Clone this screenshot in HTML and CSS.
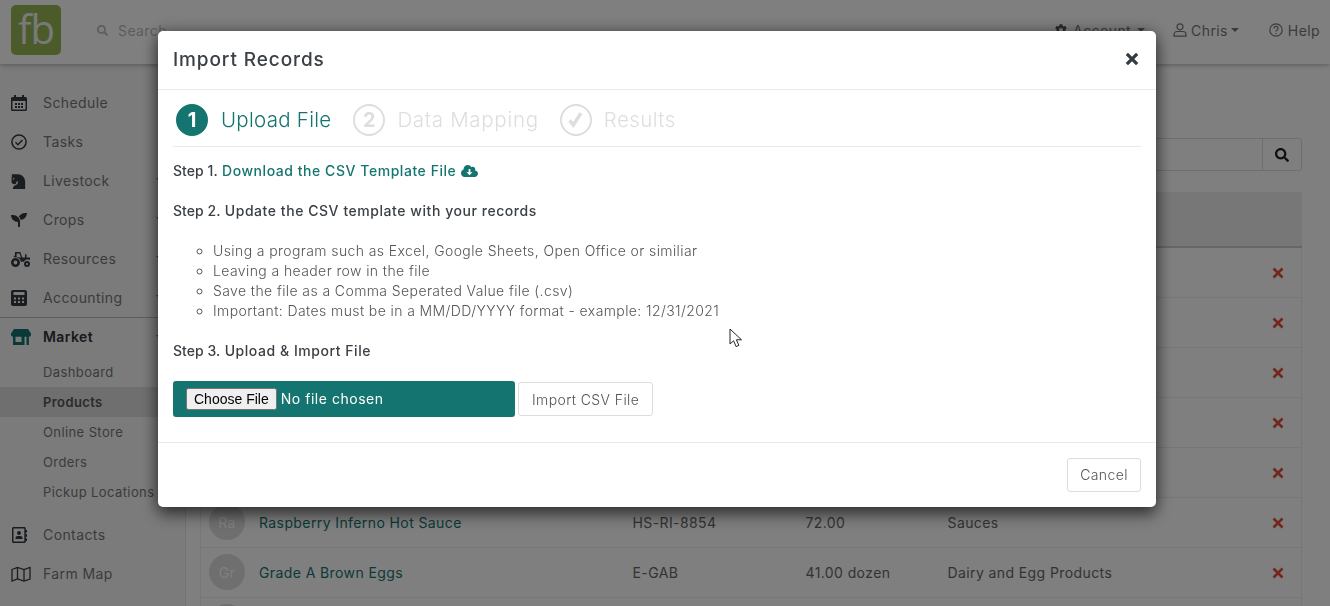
FILE: index.html
```html
<!DOCTYPE html>
<html lang="en">
<head>
<meta charset="utf-8">
<title>Products - Import Records</title>
<link rel="stylesheet" href="styles.css">
</head>
<body>
<div class="app">
  <header class="topbar">
    <div class="logo">fb</div>
    <div class="search">
      <svg class="search-icon" viewBox="0 0 512 512"><path d="M505 442.700L405.300 343c-4.500-4.500-10.600-7-17-7H372c27.600-35.300 44-79.700 44-128C416 93.100 322.900 0 208 0S0 93.100 0 208s93.100 208 208 208c48.300 0 92.700-16.400 128-44v16.300c0 6.400 2.500 12.500 7 17l99.700 99.700c9.400 9.400 24.600 9.400 33.900 0l28.300-28.300c9.400-9.400 9.400-24.600.1-34zM208 336c-70.700 0-128-57.200-128-128 0-70.700 57.200-128 128-128 70.700 0 128 57.200 128 128 0 70.700-57.200 128-128 128z"/></svg>
      <span>Search</span>
    </div>
    <nav class="topnav">
      <a class="topnav-item topnav-account">
        <svg class="top-icon" viewBox="0 0 24 24"><path d="M19.400 13c.1-.3.100-.7.100-1s0-.7-.1-1l2.100-1.600c.2-.1.200-.4.100-.6l-2-3.500c-.1-.2-.4-.3-.6-.2l-2.500 1c-.5-.4-1.100-.7-1.700-1l-.4-2.700c0-.2-.2-.4-.5-.4h-4c-.2 0-.4.200-.5.400l-.4 2.700c-.6.300-1.200.6-1.700 1l-2.500-1c-.2-.1-.5 0-.6.200l-2 3.500c-.1.200-.1.500.1.600L4.600 11c-.1.300-.1.700-.1 1s0 .7.100 1l-2.100 1.600c-.2.100-.2.400-.1.600l2 3.500c.1.200.4.300.6.200l2.500-1c.5.400 1.100.7 1.700 1l.4 2.700c0 .2.200.4.500.4h4c.2 0 .4-.2.500-.4l.4-2.700c.6-.3 1.200-.6 1.700-1l2.500 1c.2.100.5 0 .6-.2l2-3.500c.1-.2.100-.5-.1-.6zM12 15.500a3.500 3.500 0 1 1 0-7 3.500 3.500 0 0 1 0 7z"/></svg>
        <span>Account</span><i class="caret"></i>
      </a>
      <a class="topnav-item topnav-user">
        <svg class="top-icon outline" viewBox="0 0 14 14"><circle cx="7" cy="3.800" r="3"/><path d="M1 13.200v-1.700c0-1.800 1.300-3 3-3h6c1.700 0 3 1.200 3 3v1.700z"/></svg>
        <span>Chris</span><i class="caret"></i>
      </a>
      <a class="topnav-item">
        <svg class="top-icon outline" viewBox="0 0 14 14"><circle cx="7" cy="7" r="6.200"/><path d="M5 5.400c0-2.700 4.100-2.700 4.100-.1 0 1.700-2.100 1.600-2.100 3.200"/><path d="M7 10v1"/></svg>
        <span>Help</span>
      </a>
    </nav>
  </header>

  <div class="body-row">
    <aside class="sidebar">
      <a class="side-item">
        <svg class="side-icon" viewBox="0 0 16 16"><path fill-rule="evenodd" d="M3 0h2v2h6V0h2v2h1.500C15.300 2 16 2.700 16 3.500v11c0 .8-.7 1.500-1.500 1.500h-13C.7 16 0 15.300 0 14.500v-11C0 2.700.7 2 1.500 2H3zM1.500 6v8.300c0 .1.100.2.200.2h12.600c.1 0 .2-.1.200-.2V6zM4 8h2v2H4zm3 0h2v2H7zm3 0h2v2h-2zm-6 3h2v2H4zm3 0h2v2H7zm3 0h2v2h-2z"/></svg>
        <span>Schedule</span>
      </a>
      <a class="side-item">
        <svg class="side-icon stroke" viewBox="0 0 16 16"><circle cx="8" cy="8" r="7.100"/><path d="M4.500 8.300l2.400 2.400 4.600-4.800"/></svg>
        <span>Tasks</span>
      </a>
      <a class="side-item has-caret">
        <svg class="side-icon" viewBox="0 0 384 416"><path fill-rule="evenodd" d="M19 272.470l40.630 18.060a32 32 0 0 0 24.880.47l12.780-5.120a32 32 0 0 0 18.760-20.500l9.220-30.650a24 24 0 0 1 12.550-15.650L160 208v50.330a48 48 0 0 1-26.530 42.940l-57.130 28.590A80 80 0 0 0 32 401.410V416h319.860V224c0-106-85.920-192-191.860-192H12A12 12 0 0 0 0 44a16.900 16.900 0 0 0 1.790 7.580L16 80l-9 9a24 24 0 0 0-7 17v137.210a32 32 0 0 0 19 29.260zM52 128a20 20 0 1 1-20 20 20 20 0 0 1 20-20z"/></svg>
        <span>Livestock</span><i class="caret side-caret"></i>
      </a>
      <a class="side-item has-caret">
        <svg class="side-icon" viewBox="0 0 512 512"><path d="M64 96H0c0 123.700 100.300 224 224 224v144c0 8.800 7.200 16 16 16h32c8.800 0 16-7.200 16-16V320C288 196.300 187.700 96 64 96zm384-64c-84.200 0-157.400 46.500-195.700 115.200 27.700 30.200 48.200 66.900 59 107.600C424 243.100 512 147.900 512 32h-64z"/></svg>
        <span>Crops</span><i class="caret side-caret"></i>
      </a>
      <a class="side-item has-caret">
        <svg class="side-icon wide" viewBox="0 0 20 16"><path fill-rule="evenodd" d="M4 1h5.300l2 5.500h2.700V3.300h1.500v3.200H19v2.500c-2.500-.8-4.800-.4-6.300 1.700H9.800C9.500 8.300 8 6.800 5.600 6.300H2.800V4.800H4zm1.600 1.500v3.300l3.700.7.600-.2-1.400-3.800z"/><path fill-rule="evenodd" d="M4.500 7a4.500 4.500 0 1 1 0 9 4.500 4.500 0 0 1 0-9zm0 2.600a1.900 1.900 0 1 0 0 3.800 1.900 1.900 0 0 0 0-3.800zM16 10a3 3 0 1 1 0 6 3 3 0 0 1 0-6zm0 2a1 1 0 1 0 0 2 1 1 0 0 0 0-2z"/></svg>
        <span>Resources</span><i class="caret side-caret"></i>
      </a>
      <a class="side-item has-caret">
        <svg class="side-icon" viewBox="0 0 16 16"><path fill-rule="evenodd" d="M2 0h12c1.100 0 2 .9 2 2v12c0 1.100-.9 2-2 2H2c-1.100 0-2-.9-2-2V2C0 .9.900 0 2 0zm.500 2v3h11V2zM3 7.500v2h2v-2zm4 0v2h2v-2zm4 0v2h2v-2zm-8 3.500v2h2v-2zm4 0v2h2v-2zm4 0v2h2v-2z"/></svg>
        <span>Accounting</span><i class="caret side-caret"></i>
      </a>
      <div class="side-group">
        <a class="side-item side-item-active has-caret">
          <svg class="side-icon wide teal" viewBox="0 0 20 16"><path fill-rule="evenodd" d="M3 0h14l3 4.500V6c0 1-1 1.700-2 1.700h-.1V16h-2.400V7.700h-2V16H2V7.700C1 7.700 0 7 0 6V4.500zM4.500 7.700V13h6V7.700z"/></svg>
          <span>Market</span><i class="caret side-caret"></i>
        </a>
        <a class="side-sub">Dashboard</a>
        <a class="side-sub side-sub-current">Products</a>
        <a class="side-sub">Online Store</a>
        <a class="side-sub">Orders</a>
        <a class="side-sub">Pickup Locations</a>
      </div>
      <a class="side-item">
        <svg class="side-icon" viewBox="0 0 16 16"><path fill-rule="evenodd" d="M2.500 0h10.800c.9 0 1.500.7 1.500 1.500V3H16v2.500h-1.200v1.700H16v2.500h-1.200v1.700H16V14h-1.200v.5c0 .8-.6 1.500-1.500 1.500H2.500C1.700 16 1 15.300 1 14.500v-13C1 .7 1.700 0 2.500 0zm0 1.500v13h10.800v-13zM8 4a2 2 0 1 1 0 4 2 2 0 0 1 0-4zM4.500 12v-1c0-1.100.9-2 2-2h3c1.100 0 2 .9 2 2v1z"/></svg>
        <span>Contacts</span>
      </a>
      <a class="side-item">
        <svg class="side-icon wide stroke thin" viewBox="0 0 20 16"><path d="M1 3.500L6.500 1.500 13 3.500 19 1.500V13l-6 2-6.500-2L1 15z"/><path d="M6.500 1.500V13M13 3.500V15"/></svg>
        <span>Farm Map</span>
      </a>
      <a class="side-item">
        <svg class="side-icon" viewBox="0 0 16 16"><circle cx="8" cy="8" r="7"/></svg>
      </a>
    </aside>

    <main class="main">
      <div class="input-group">
        <div class="input-field"></div>
        <button class="input-btn" type="button" aria-label="Search">
          <svg viewBox="0 0 512 512"><path d="M505 442.700L405.300 343c-4.500-4.500-10.600-7-17-7H372c27.600-35.300 44-79.700 44-128C416 93.100 322.900 0 208 0S0 93.100 0 208s93.100 208 208 208c48.300 0 92.700-16.400 128-44v16.300c0 6.400 2.500 12.500 7 17l99.700 99.700c9.400 9.400 24.600 9.400 33.900 0l28.300-28.300c9.400-9.400 9.400-24.600.1-34zM208 336c-70.700 0-128-57.200-128-128 0-70.700 57.200-128 128-128 70.700 0 128 57.200 128 128 0 70.700-57.200 128-128 128z"/></svg>
        </button>
      </div>
      <table class="table">
        <thead>
          <tr><th class="col-name"></th><th class="col-sku"></th><th class="col-qty"></th><th class="col-cat"></th><th class="col-act"></th></tr>
        </thead>
        <tbody>
          <tr><td></td><td></td><td></td><td></td><td class="col-act"><svg class="del" viewBox="0 0 12 12"><path d="M1.500 1.500l9 9M10.500 1.500l-9 9"/></svg></td></tr>
          <tr><td></td><td></td><td></td><td></td><td class="col-act"><svg class="del" viewBox="0 0 12 12"><path d="M1.500 1.500l9 9M10.500 1.500l-9 9"/></svg></td></tr>
          <tr><td></td><td></td><td></td><td></td><td class="col-act"><svg class="del" viewBox="0 0 12 12"><path d="M1.500 1.500l9 9M10.500 1.500l-9 9"/></svg></td></tr>
          <tr><td></td><td></td><td></td><td></td><td class="col-act"><svg class="del" viewBox="0 0 12 12"><path d="M1.500 1.500l9 9M10.500 1.500l-9 9"/></svg></td></tr>
          <tr><td></td><td></td><td></td><td></td><td class="col-act"><svg class="del" viewBox="0 0 12 12"><path d="M1.500 1.500l9 9M10.500 1.500l-9 9"/></svg></td></tr>
          <tr>
            <td class="cell-name"><span class="avatar">Ra</span><a class="prod-link">Raspberry Inferno Hot Sauce</a></td>
            <td>HS-RI-8854</td><td>72.00</td><td>Sauces</td><td class="col-act"><svg class="del" viewBox="0 0 12 12"><path d="M1.500 1.500l9 9M10.500 1.500l-9 9"/></svg></td>
          </tr>
          <tr>
            <td class="cell-name"><span class="avatar">Gr</span><a class="prod-link">Grade A Brown Eggs</a></td>
            <td>E-GAB</td><td>41.00 dozen</td><td>Dairy and Egg Products</td><td class="col-act"><svg class="del" viewBox="0 0 12 12"><path d="M1.500 1.500l9 9M10.500 1.500l-9 9"/></svg></td>
          </tr>
          <tr>
            <td class="cell-name"><span class="avatar"></span></td>
            <td></td><td></td><td></td><td class="col-act"></td>
          </tr>
        </tbody>
      </table>
    </main>
  </div>
</div>

<div class="backdrop"></div>

<section class="modal">
  <div class="modal-head">
    <h2 class="modal-title">Import Records</h2>
    <button class="modal-close" type="button" aria-label="Close">
      <svg viewBox="0 0 14 14"><path d="M2.500 2.500l9 9M11.500 2.500l-9 9"/></svg>
    </button>
  </div>
  <div class="modal-body">
    <div class="steps">
      <div class="step step-on"><span class="step-num">1</span><span class="step-label">Upload File</span></div>
      <div class="step step-map"><span class="step-num">2</span><span class="step-label">Data Mapping</span></div>
      <div class="step step-done"><span class="step-num">
        <svg viewBox="0 0 16 16"><path d="M3 8.700l3.200 3.900L12.600 2.600"/></svg>
      </span><span class="step-label">Results</span></div>
    </div>
    <p class="para strong"><span class="step-tag">Step 1.</span> <a class="dl-link">Download the CSV Template File <svg class="cloud" viewBox="0 0 20 14"><path fill-rule="evenodd" d="M16.500 6.300C16.700 5.800 16.800 5.400 16.800 5c0-1.600-1.300-3-3-3-.6 0-1.200.2-1.600.5C11.300 1 9.700 0 8 0 5.200 0 3 2.200 3 5v.3C1.300 5.900 0 7.600 0 9.500 0 12 2 14 4.500 14H16c2.200 0 4-1.800 4-4 0-1.900-1.500-3.500-3.500-3.700zM9 4.500h2v4h2.500L10 12 6.500 8.500H9z"/></svg></a></p>
    <p class="para strong"><span class="step-tag">Step 2.</span> Update the CSV template with your records</p>
    <ul class="tips">
      <li>Using a program such as Excel, Google Sheets, Open Office or similiar</li>
      <li>Leaving a header row in the file</li>
      <li>Save the file as a Comma Seperated Value file (.csv)</li>
      <li>Important: Dates must be in a MM/DD/YYYY format - example: 12/31/2021</li>
    </ul>
    <p class="para strong"><span class="step-tag">Step 3.</span> Upload &amp; Import File</p>
    <div class="upload-row">
      <input class="file-input" type="file">
      <button class="btn" type="button">Import CSV File</button>
    </div>
  </div>
  <div class="modal-foot">
    <button class="btn btn-cancel" type="button">Cancel</button>
  </div>
</section>

<svg class="cursor" viewBox="0 0 13 20"><path d="M1 1v15l3.600-3.200 2.500 5.800 2.800-1.200-2.500-5.600H12.500z"/></svg>
</body>
</html>
```
FILE: styles.css
```css
* { box-sizing: border-box; }
html, body { margin: 0; height: 606px; overflow: hidden; }
body {
  font-family: "Inter", "Noto Sans", sans-serif;
  font-size: 14px;
  letter-spacing: .4px;
  color: #666;
  background: #fff;
}
.app { height: 606px; display: flex; flex-direction: column; overflow: hidden; }

/* top bar */
.topbar {
  height: 64px; flex: none; display: flex; align-items: center;
  background: #fff; box-shadow: 0 1px 5px rgba(0,0,0,.3); position: relative;
  padding: 0 10px 4px 11px;
}
.logo {
  width: 50px; height: 50px; border-radius: 5px; background: #98b654; color: #f2f2f2;
  font-family: "Open Sans", sans-serif; font-weight: 400; font-size: 40px; line-height: 48px;
  letter-spacing: -1px; text-align: center;
}
.search { display: flex; align-items: center; margin-left: 36px; color: #bbb; font-size: 14px; gap: 10px; }
.search-icon { width: 11px; height: 11px; fill: #bbb; }
.topnav { margin-left: auto; display: flex; align-items: center; color: #777; }
.topnav-item { display: flex; align-items: center; gap: 5px; }
.topnav-account { margin-right: 28px; }
.topnav-user { margin-right: 30px; gap: 4px; }
.topnav-user .caret { margin-left: -1px; }
.top-icon { width: 14px; height: 14px; fill: #555; }
.top-icon.outline { fill: none; stroke: #777; stroke-width: 1.200; }
.caret {
  display: inline-block; width: 0; height: 0; margin-left: 1px;
  border-left: 4px solid transparent; border-right: 4px solid transparent; border-top: 4px solid #777;
}

/* layout */
.body-row { flex: 1; min-height: 0; display: flex; }
.sidebar {
  width: 186px; flex: none; background: #f6f6f6; border-right: 1px solid #e6e6e6;
  padding-top: 19px; overflow: hidden;
}
.side-item { height: 39px; display: flex; align-items: center; padding-left: 11px; color: #777; position: relative; }
.side-item span { margin-left: 16px; }
.side-icon { width: 16px; height: 16px; flex: none; fill: #343a40; }
.side-icon.wide { width: 20px; margin-right: -4px; }
.side-icon.teal { fill: #147570; }
.side-icon.stroke { fill: none; stroke: #343a40; stroke-width: 1.500; }
.side-icon.thin { stroke-width: 1.300; }
.side-caret { position: absolute; left: 155px; top: 17px; border-top-color: #a55; }
.side-group { border-top: 1px solid #bbb; padding-bottom: 8px; }
.side-item-active { color: #333; font-weight: 600; padding-bottom: 2px; }
.side-sub { display: block; height: 30px; line-height: 30px; padding-left: 43px; font-size: 13px; color: #777; }
.side-sub-current { background: #dedede; font-weight: 600; color: #555; }

/* main */
.main { flex: 1; min-width: 0; padding: 74px 28px 0 14px; }
.input-group { height: 33px; display: flex; border: 1px solid #ddd; border-radius: 3px; }
.input-field { flex: 1; }
.input-btn {
  width: 39px; padding: 0; background: transparent; border: 0; border-left: 1px solid #ddd;
  display: flex; align-items: center; justify-content: center;
}
.input-btn svg { width: 14px; height: 14px; fill: #1d2124; }
.table { width: 1102px; border-collapse: collapse; table-layout: fixed; margin-top: 21px; border-left: 1px solid #eee; border-right: 1px solid #eee; }
.table th { height: 55px; background: #eee; border-bottom: 2px solid #ccc; text-align: left; padding: 0 12px; font-weight: 600; }
.table td { height: 50px; padding: 0 12px; border-bottom: 1px solid #eee; white-space: nowrap; color: #666; }
.col-name { width: 420px; }
.col-sku { width: 173px; }
.col-qty { width: 142px; }
.col-cat { width: 300px; }
.table td.col-act { padding: 2px 17px 0 0; }
.table td.cell-name { padding-left: 8px; }
.avatar {
  display: inline-flex; width: 36px; height: 36px; border-radius: 50%; background: #dfdfdf; color: #fff;
  align-items: center; justify-content: center; margin-right: 14px; vertical-align: middle; font-size: 14px;
}
.prod-link { color: #147570; vertical-align: middle; }
.del { width: 12px; height: 12px; display: block; margin-left: auto; fill: none; stroke: #e74c3c; stroke-width: 2.600; }

/* overlay */
.backdrop { position: fixed; inset: 0; background: rgba(0,0,0,.5); z-index: 2; }

/* modal */
.modal {
  position: fixed; left: 158px; top: 31px; width: 998px; height: 476px; z-index: 3;
  background: #fff; border-radius: 5px; box-shadow: 0 8px 16px rgba(0,0,0,.5), 0 0 16px rgba(0,0,0,.35);
  display: flex; flex-direction: column; color: #3b4045;
}
.modal-head {
  height: 59px; flex: none; display: flex; align-items: center; justify-content: space-between;
  padding: 0 15px 2px; border-bottom: 1px solid #e9ecef;
}
.modal-title { margin: 0; font-size: 19px; font-weight: 500; color: #3b4045; letter-spacing: .9px; }
.modal-close { width: 16px; height: 16px; padding: 0; border: 0; background: none; margin-right: 1px; }
.modal-close svg { display: block; width: 16px; height: 16px; fill: none; stroke: #343a40; stroke-width: 2.800; }
.modal-body { flex: 1; padding: 0 15px; }
.steps { display: flex; align-items: center; height: 57px; margin-bottom: 14px; padding: 3px 0 0 3px; border-bottom: 1px solid #e9ecef; gap: 21px; }
.step { display: flex; align-items: center; gap: 12px; color: #dedede; }
.step-num {
  width: 32px; height: 32px; border-radius: 50%; border: 2px solid #dedede; display: flex;
  align-items: center; justify-content: center; font-size: 20px; font-weight: 700; color: #dedede; letter-spacing: 0;
}
.step-num svg { width: 19px; height: 19px; fill: none; stroke: #dedede; stroke-width: 3; }
.step-label { font-size: 20.500px; font-weight: 300; letter-spacing: .45px; }
.step-on { color: #147570; gap: 13px; margin-right: 1px; }
.step-on .step-label { letter-spacing: .27px; }
.step-map .step-label { letter-spacing: .7px; }
.step-on .step-num { background: #147570; border-color: #147570; color: #fff; }
.para { margin: 0 0 20px; line-height: 20px; }
.strong { font-weight: 500; font-size: 14px; letter-spacing: .55px; }
.step-tag { letter-spacing: .05px; }
.dl-link { color: #147570; }
.cloud { width: 17px; height: 12px; fill: #147570; vertical-align: -1px; }
.tips { margin: 0 0 20px; padding: 0 0 0 40px; list-style: circle; line-height: 20px; color: #555; font-weight: 300; }
.upload-row { display: flex; align-items: center; gap: 3px; }
.file-input {
  width: 342px; height: 36px; background: #147570; color: #fff; border-radius: 3px;
  padding: 7px 13px; font-family: inherit; font-size: 14px; letter-spacing: .53px;
}
.file-input::file-selector-button { letter-spacing: 0; font-family: "Liberation Sans", sans-serif; }
.btn {
  height: 34px; padding: 0 13px; background: #fff; border: 1px solid #ddd; border-radius: 3px;
  color: #555; font: 300 14px "Inter", sans-serif; letter-spacing: .4px;
}
.modal-foot {
  height: 65px; flex: none; display: flex; align-items: center; justify-content: flex-end;
  padding: 0 15px 1px; border-top: 1px solid #e9ecef;
}
.btn-cancel { width: 74px; padding: 0; }
.cursor { position: fixed; left: 729px; top: 328px; width: 13px; height: 20px; z-index: 4; fill: #fff; stroke: #222; stroke-width: 1; }
```
